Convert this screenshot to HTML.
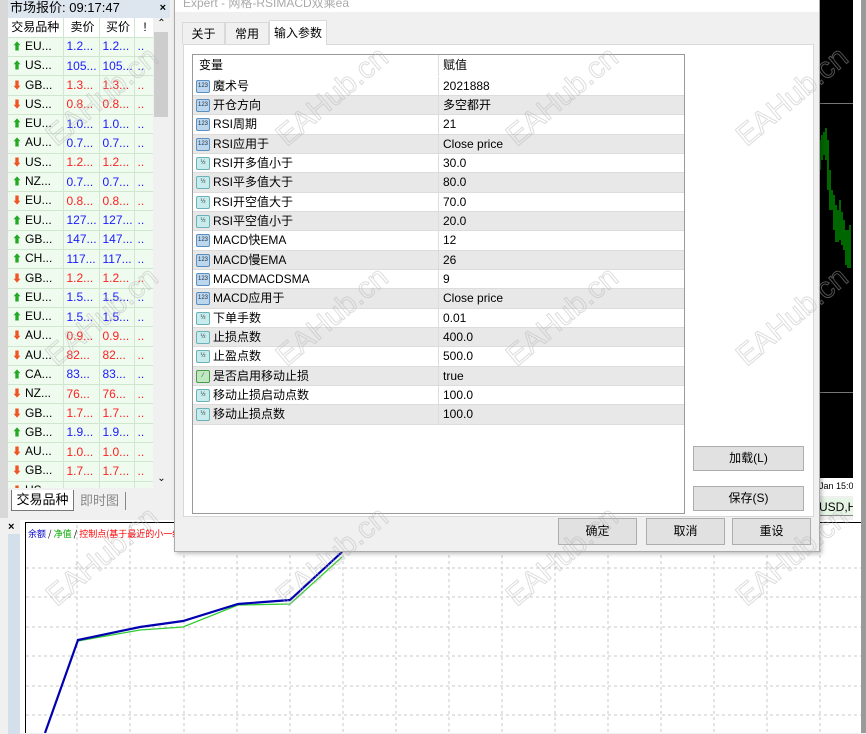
<!DOCTYPE html>
<html><head><meta charset="utf-8"><style>
*{margin:0;padding:0;box-sizing:border-box}
body{width:866px;height:733px;overflow:hidden;background:#f0f0f0;position:relative;font-family:"Liberation Sans","Noto Sans CJK SC",sans-serif;font-size:12px;color:#000}
.a{position:absolute}
.mw td{height:19.3px;border-right:1px solid #cfe6cf;border-bottom:1px solid #cfe6cf;background:#effbef;font-size:12px;white-space:nowrap;overflow:hidden;line-height:17px}
.mw td+td{padding-left:3px}
.up{color:#1a1aff}.dn{color:#ff2020}
.ar{display:inline-block;width:10px;margin:0 3px 0 4px;font-size:10px}
.row{position:absolute;left:0;width:491px;height:19.33px;border-bottom:1px solid #dcdcdc;line-height:18px;white-space:nowrap}
.row.g{background:#e8e8e8}
.row .n{position:absolute;left:0;top:0;width:245px;padding-left:20px;height:19px}
.row .v{position:absolute;left:245px;top:0;padding-left:4px;border-left:1px solid #ddd;height:19px}
.ic{position:absolute;left:3px;top:3px;width:14px;height:13px;border:1px solid #5a8fc0;background:#bcd6ee;border-radius:2px;font-size:6px;line-height:11px;text-align:center;color:#234;font-style:normal}
.ic.h{background:#c8ecec;border-color:#6cb0b8}
.ic.gg{background:#bfe8bf;border-color:#4a9a4a}
.btn{position:absolute;background:#e1e1e1;border:1px solid #adadad;text-align:center;font-size:12px}
.wm{position:absolute;font-size:30px;font-family:"Liberation Sans",sans-serif;transform:rotate(-40deg);white-space:nowrap;pointer-events:none;-webkit-text-stroke:1px rgba(180,180,180,.45);color:transparent}
</style></head><body>
<div class="a" style="left:0;top:0;width:8px;height:520px;background:#d8d8d8"></div>
<div class="a" style="left:8px;top:0;width:162px;height:18px;background:#dde6ef;font-size:13px;padding-left:2px;line-height:16px">市场报价: 09:17:47<span style="position:absolute;right:4px;font-weight:bold;font-size:11px">×</span></div>
<div class="a" style="left:8px;top:18px;width:162px;height:470px;background:#fff;overflow:hidden">
<table class="mw" style="border-collapse:collapse;width:145px;table-layout:fixed">
<colgroup><col style="width:55px"><col style="width:36px"><col style="width:35px"><col style="width:19px"></colgroup>
<tr><td style="background:#fff;text-align:center">交易品种</td><td style="background:#fff;text-align:center">卖价</td><td style="background:#fff;text-align:center">买价</td><td style="background:#fff;text-align:center">!</td></tr>
<tr><td><span class="ar" style="color:#2a2">⬆</span>EU...</td><td class="up">1.2...</td><td class="up">1.2...</td><td class="up">..</td></tr>
<tr><td><span class="ar" style="color:#2a2">⬆</span>US...</td><td class="up">105...</td><td class="up">105...</td><td class="up">..</td></tr>
<tr><td><span class="ar" style="color:#e52">⬇</span>GB...</td><td class="dn">1.3...</td><td class="dn">1.3...</td><td class="dn">..</td></tr>
<tr><td><span class="ar" style="color:#e52">⬇</span>US...</td><td class="dn">0.8...</td><td class="dn">0.8...</td><td class="dn">..</td></tr>
<tr><td><span class="ar" style="color:#2a2">⬆</span>EU...</td><td class="up">1.0...</td><td class="up">1.0...</td><td class="up">..</td></tr>
<tr><td><span class="ar" style="color:#2a2">⬆</span>AU...</td><td class="up">0.7...</td><td class="up">0.7...</td><td class="up">..</td></tr>
<tr><td><span class="ar" style="color:#e52">⬇</span>US...</td><td class="dn">1.2...</td><td class="dn">1.2...</td><td class="dn">..</td></tr>
<tr><td><span class="ar" style="color:#2a2">⬆</span>NZ...</td><td class="up">0.7...</td><td class="up">0.7...</td><td class="up">..</td></tr>
<tr><td><span class="ar" style="color:#e52">⬇</span>EU...</td><td class="dn">0.8...</td><td class="dn">0.8...</td><td class="dn">..</td></tr>
<tr><td><span class="ar" style="color:#2a2">⬆</span>EU...</td><td class="up">127...</td><td class="up">127...</td><td class="up">..</td></tr>
<tr><td><span class="ar" style="color:#2a2">⬆</span>GB...</td><td class="up">147...</td><td class="up">147...</td><td class="up">..</td></tr>
<tr><td><span class="ar" style="color:#2a2">⬆</span>CH...</td><td class="up">117...</td><td class="up">117...</td><td class="up">..</td></tr>
<tr><td><span class="ar" style="color:#e52">⬇</span>GB...</td><td class="dn">1.2...</td><td class="dn">1.2...</td><td class="dn">..</td></tr>
<tr><td><span class="ar" style="color:#2a2">⬆</span>EU...</td><td class="up">1.5...</td><td class="up">1.5...</td><td class="up">..</td></tr>
<tr><td><span class="ar" style="color:#2a2">⬆</span>EU...</td><td class="up">1.5...</td><td class="up">1.5...</td><td class="up">..</td></tr>
<tr><td><span class="ar" style="color:#e52">⬇</span>AU...</td><td class="dn">0.9...</td><td class="dn">0.9...</td><td class="dn">..</td></tr>
<tr><td><span class="ar" style="color:#e52">⬇</span>AU...</td><td class="dn">82...</td><td class="dn">82...</td><td class="dn">..</td></tr>
<tr><td><span class="ar" style="color:#2a2">⬆</span>CA...</td><td class="up">83...</td><td class="up">83...</td><td class="up">..</td></tr>
<tr><td><span class="ar" style="color:#e52">⬇</span>NZ...</td><td class="dn">76...</td><td class="dn">76...</td><td class="dn">..</td></tr>
<tr><td><span class="ar" style="color:#e52">⬇</span>GB...</td><td class="dn">1.7...</td><td class="dn">1.7...</td><td class="dn">..</td></tr>
<tr><td><span class="ar" style="color:#2a2">⬆</span>GB...</td><td class="up">1.9...</td><td class="up">1.9...</td><td class="up">..</td></tr>
<tr><td><span class="ar" style="color:#e52">⬇</span>AU...</td><td class="dn">1.0...</td><td class="dn">1.0...</td><td class="dn">..</td></tr>
<tr><td><span class="ar" style="color:#e52">⬇</span>GB...</td><td class="dn">1.7...</td><td class="dn">1.7...</td><td class="dn">..</td></tr>
<tr><td><span class="ar" style="color:#e52">⬇</span>US</td><td></td><td></td><td></td></tr>
</table>
<div class="a" style="left:145px;top:0;width:17px;height:470px;background:#f0f0f0"><div style="text-align:center;font-size:10px">⌃</div><div class="a" style="left:1px;top:14px;width:14px;height:85px;background:#cdcdcd"></div><div style="position:absolute;bottom:4px;width:100%;text-align:center;font-size:10px">⌄</div></div>
</div>
<div class="a" style="left:8px;top:488px;width:162px;height:30px;background:#f0f0f0"></div>
<div class="a" style="left:11px;top:490px;width:63px;height:21px;background:#fff;border:1px solid #777;border-top:none;text-align:center;font-size:13px;line-height:20px">交易品种</div>
<div class="a" style="left:74px;top:492px;width:52px;height:18px;border-right:1px solid #888;text-align:center;font-size:13px;color:#888;line-height:18px">即时图</div>
<div class="a" style="left:0;top:518px;width:20px;height:215px;background:#f0f0f0"><div style="position:absolute;left:8px;top:16px;width:12px;height:200px;background:#d3dfea"></div><div style="font-size:11px;font-weight:bold;padding:3px 0 0 8px">×</div></div>
<div class="a" style="left:20px;top:520px;width:846px;height:213px;background:#fff"></div>
<svg class="a" style="left:0;top:0" width="866" height="733">
<g stroke="#c8c8c8" stroke-dasharray="3,3" stroke-width="1">
<line x1="77" y1="525" x2="77" y2="733"/><line x1="130" y1="525" x2="130" y2="733"/><line x1="184" y1="525" x2="184" y2="733"/><line x1="237" y1="525" x2="237" y2="733"/><line x1="290" y1="525" x2="290" y2="733"/><line x1="343" y1="525" x2="343" y2="733"/><line x1="396" y1="525" x2="396" y2="733"/><line x1="449" y1="525" x2="449" y2="733"/><line x1="502" y1="525" x2="502" y2="733"/><line x1="555" y1="525" x2="555" y2="733"/><line x1="608" y1="525" x2="608" y2="733"/><line x1="661" y1="525" x2="661" y2="733"/><line x1="714" y1="525" x2="714" y2="733"/><line x1="767" y1="525" x2="767" y2="733"/><line x1="820" y1="525" x2="820" y2="733"/>
<line x1="26" y1="568" x2="866" y2="568"/><line x1="26" y1="597" x2="866" y2="597"/><line x1="26" y1="627" x2="866" y2="627"/><line x1="26" y1="656" x2="866" y2="656"/><line x1="26" y1="686" x2="866" y2="686"/><line x1="26" y1="715" x2="866" y2="715"/>
</g>
<line x1="25.5" y1="522" x2="25.5" y2="733" stroke="#000"/><line x1="25" y1="522.5" x2="866" y2="522.5" stroke="#000"/>
<polyline points="45,733 78,641 140,630 183,627 238,605 290,604 342,557" fill="none" stroke="#3c3" stroke-width="1.3"/>
<polyline points="45,733 78,640 140,627 183,621 238,604 290,600 342,552" fill="none" stroke="#0000b0" stroke-width="2.2"/>
<text x="28" y="537" font-size="9" fill="#00c" font-family="Noto Sans CJK SC">余额 <tspan fill="#000">/</tspan> <tspan fill="#0a0">净值</tspan> <tspan fill="#000">/</tspan> <tspan fill="#f00">控制点(基于最近的小一级时</tspan></text>
</svg>
<div class="a" style="left:819px;top:0;width:34px;height:478px;background:#000"></div>
<div class="a" style="left:819px;top:103px;width:34px;height:1px;background:#777"></div>
<div class="a" style="left:819px;top:392px;width:34px;height:1px;background:#777"></div>
<svg class="a" style="left:819px;top:120px" width="34" height="160"><g stroke="#0c0" stroke-width="1"><line x1="1" y1="20" x2="1" y2="50"/><line x1="3" y1="15" x2="3" y2="40"/><line x1="5" y1="12" x2="5" y2="35"/><line x1="7" y1="8" x2="7" y2="40"/><line x1="9" y1="20" x2="9" y2="70"/><line x1="11" y1="50" x2="11" y2="90"/><line x1="13" y1="70" x2="13" y2="90"/><line x1="15" y1="75" x2="15" y2="110"/><line x1="17" y1="85" x2="17" y2="122"/><line x1="19" y1="90" x2="19" y2="122"/><line x1="21" y1="80" x2="21" y2="120"/><line x1="23" y1="92" x2="23" y2="125"/><line x1="25" y1="100" x2="25" y2="130"/><line x1="27" y1="110" x2="27" y2="145"/><line x1="29" y1="110" x2="29" y2="148"/><line x1="31" y1="105" x2="31" y2="148"/></g></svg>
<div class="a" style="left:819px;top:478px;width:34px;height:18px;background:#fff;font-size:9px;line-height:16px;white-space:nowrap;overflow:hidden">Jan 15:00</div>
<div class="a" style="left:819px;top:498px;width:34px;height:18px;background:#e6f5e6;font-size:12px;line-height:18px;white-space:nowrap;overflow:hidden;border-bottom:1px solid #888">USD,H1</div>
<div class="a" style="left:853px;top:0;width:9px;height:520px;background:#fff"></div>
<div class="a" style="left:861px;top:0;width:5px;height:733px;background:#9a9a9a"></div>
<div class="a" style="left:174px;top:-2px;width:646px;height:554px;background:#f0f0f0;border:1px solid #aaa;box-shadow:2px 2px 4px rgba(0,0,0,.25)">
<div style="height:13px;background:#fff;color:#aaa;font-size:12px;line-height:8px;padding-left:8px;overflow:hidden">Expert - 网格-RSIMACD双乘ea</div>
</div>
<div class="a" style="left:182px;top:22px;width:43px;height:22px;border:1px solid #d9d9d9;border-bottom:none;font-size:12px;text-align:center;line-height:22px;background:#f0f0f0">关于</div>
<div class="a" style="left:225px;top:22px;width:44px;height:22px;border:1px solid #d9d9d9;border-bottom:none;font-size:12px;text-align:center;line-height:22px">常用</div>
<div class="a" style="left:269px;top:20px;width:58px;height:25px;border:1px solid #d9d9d9;border-bottom:none;background:#fff;font-size:12px;text-align:center;line-height:24px;z-index:2">输入参数</div>
<div class="a" style="left:183px;top:44px;width:631px;height:473px;background:#fff;border:1px solid #d9d9d9"></div>
<div class="a" style="left:192px;top:54px;width:493px;height:460px;border:1px solid #999;background:#fff;overflow:hidden">
<div class="row" style="top:0;height:21px;line-height:20px;border-bottom:none"><span class="n" style="padding-left:6px">变量</span><span class="v" style="height:21px">赋值</span></div>
<div class="row" style="top:21.5px"><span class="n"><i class="ic">123</i>魔术号</span><span class="v">2021888</span></div>
<div class="row g" style="top:40.8px"><span class="n"><i class="ic">123</i>开仓方向</span><span class="v">多空都开</span></div>
<div class="row" style="top:60.2px"><span class="n"><i class="ic">123</i>RSI周期</span><span class="v">21</span></div>
<div class="row g" style="top:79.5px"><span class="n"><i class="ic">123</i>RSI应用于</span><span class="v">Close price</span></div>
<div class="row" style="top:98.8px"><span class="n"><i class="ic h">½</i>RSI开多值小于</span><span class="v">30.0</span></div>
<div class="row g" style="top:118.2px"><span class="n"><i class="ic h">½</i>RSI平多值大于</span><span class="v">80.0</span></div>
<div class="row" style="top:137.5px"><span class="n"><i class="ic h">½</i>RSI开空值大于</span><span class="v">70.0</span></div>
<div class="row g" style="top:156.8px"><span class="n"><i class="ic h">½</i>RSI平空值小于</span><span class="v">20.0</span></div>
<div class="row" style="top:176.2px"><span class="n"><i class="ic">123</i>MACD快EMA</span><span class="v">12</span></div>
<div class="row g" style="top:195.5px"><span class="n"><i class="ic">123</i>MACD慢EMA</span><span class="v">26</span></div>
<div class="row" style="top:214.8px"><span class="n"><i class="ic">123</i>MACDMACDSMA</span><span class="v">9</span></div>
<div class="row g" style="top:234.2px"><span class="n"><i class="ic">123</i>MACD应用于</span><span class="v">Close price</span></div>
<div class="row" style="top:253.5px"><span class="n"><i class="ic h">½</i>下单手数</span><span class="v">0.01</span></div>
<div class="row g" style="top:272.8px"><span class="n"><i class="ic h">½</i>止损点数</span><span class="v">400.0</span></div>
<div class="row" style="top:292.2px"><span class="n"><i class="ic h">½</i>止盈点数</span><span class="v">500.0</span></div>
<div class="row g" style="top:311.5px"><span class="n"><i class="ic gg">⁄</i>是否启用移动止损</span><span class="v">true</span></div>
<div class="row" style="top:330.8px"><span class="n"><i class="ic h">½</i>移动止损启动点数</span><span class="v">100.0</span></div>
<div class="row g" style="top:350.2px"><span class="n"><i class="ic h">½</i>移动止损点数</span><span class="v">100.0</span></div>
</div>
<div class="btn" style="left:693px;top:446px;width:111px;height:25px;line-height:23px">加载(L)</div>
<div class="btn" style="left:693px;top:486px;width:111px;height:25px;line-height:23px">保存(S)</div>
<div class="btn" style="left:558px;top:518px;width:79px;height:27px;line-height:25px">确定</div>
<div class="btn" style="left:646px;top:518px;width:79px;height:27px;line-height:25px">取消</div>
<div class="btn" style="left:732px;top:518px;width:79px;height:27px;line-height:25px">重设</div>
<div class="wm" style="left:35px;top:80px">EAHub.cn</div>
<div class="wm" style="left:265px;top:80px">EAHub.cn</div>
<div class="wm" style="left:495px;top:80px">EAHub.cn</div>
<div class="wm" style="left:725px;top:80px">EAHub.cn</div>
<div class="wm" style="left:35px;top:300px">EAHub.cn</div>
<div class="wm" style="left:265px;top:300px">EAHub.cn</div>
<div class="wm" style="left:495px;top:300px">EAHub.cn</div>
<div class="wm" style="left:725px;top:300px">EAHub.cn</div>
<div class="wm" style="left:35px;top:540px">EAHub.cn</div>
<div class="wm" style="left:265px;top:540px">EAHub.cn</div>
<div class="wm" style="left:495px;top:540px">EAHub.cn</div>
<div class="wm" style="left:725px;top:540px">EAHub.cn</div>
</body></html>
